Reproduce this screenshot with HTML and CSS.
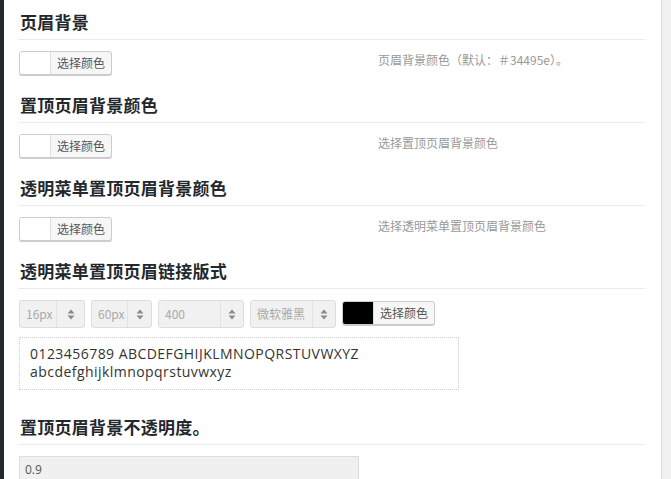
FILE: index.html
```html
<!DOCTYPE html>
<html lang="zh-CN">
<head>
<meta charset="utf-8">
<link rel="stylesheet" href="styles.css">
</head>
<body>
<div class="page">
  <div class="sidebar"></div>
  <main class="main">
    <section class="section">
      <h3 class="title">页眉背景</h3>
      <div class="row">
        <div class="color-btn"><span class="swatch"></span><span class="btn-label">选择颜色</span></div>
        <p class="desc">页眉背景颜色（默认：＃34495e）。</p>
      </div>
    </section>
    <section class="section">
      <h3 class="title">置顶页眉背景颜色</h3>
      <div class="row">
        <div class="color-btn"><span class="swatch"></span><span class="btn-label">选择颜色</span></div>
        <p class="desc">选择置顶页眉背景颜色</p>
      </div>
    </section>
    <section class="section">
      <h3 class="title">透明菜单置顶页眉背景颜色</h3>
      <div class="row">
        <div class="color-btn"><span class="swatch"></span><span class="btn-label">选择颜色</span></div>
        <p class="desc">选择透明菜单置顶页眉背景颜色</p>
      </div>
    </section>
    <section class="section section-type">
      <h3 class="title">透明菜单置顶页眉链接版式</h3>
      <div class="controls">
        <div class="select s1"><span class="sel-text">16px</span><span class="sel-arrow"><svg width="8" height="11" viewBox="0 0 8 11"><path d="M4 0.5L7.5 4.5H0.5Z M4 10.5L7.5 6.5H0.5Z" fill="#8a8a8a"/></svg></span></div>
        <div class="select s2"><span class="sel-text">60px</span><span class="sel-arrow"><svg width="8" height="11" viewBox="0 0 8 11"><path d="M4 0.5L7.5 4.5H0.5Z M4 10.5L7.5 6.5H0.5Z" fill="#8a8a8a"/></svg></span></div>
        <div class="select s3"><span class="sel-text">400</span><span class="sel-arrow"><svg width="8" height="11" viewBox="0 0 8 11"><path d="M4 0.5L7.5 4.5H0.5Z M4 10.5L7.5 6.5H0.5Z" fill="#8a8a8a"/></svg></span></div>
        <div class="select s4"><span class="sel-text">微软雅黑</span><span class="sel-arrow"><svg width="8" height="11" viewBox="0 0 8 11"><path d="M4 0.5L7.5 4.5H0.5Z M4 10.5L7.5 6.5H0.5Z" fill="#8a8a8a"/></svg></span></div>
        <div class="color-btn"><span class="swatch swatch-black"></span><span class="btn-label">选择颜色</span></div>
      </div>
      <div class="preview">
        <div class="pv-line">0123456789 ABCDEFGHIJKLMNOPQRSTUVWXYZ</div>
        <div class="pv-line">abcdefghijklmnopqrstuvwxyz</div>
      </div>
    </section>
    <section class="section section-last">
      <h3 class="title">置顶页眉背景不透明度。</h3>
      <div class="input">0.9</div>
    </section>
  </main>
  <div class="rail"></div>
</div>
</body>
</html>
```
FILE: styles.css
```css
* { box-sizing: border-box; }
html, body { margin: 0; padding: 0; height: 100%; overflow: hidden; background: #fff; }
body { font-family: "Noto Sans CJK SC", "Open Sans", sans-serif; color: #333; }
.page { display: flex; height: 479px; }
.sidebar { width: 4px; background: #23282d; flex: none; }
.rail { width: 10px; flex: none; background: #f1f1f1; border-left: 1px solid #dcdcdc; }
.main { flex: 1; padding: 10px 16px 0 14px; }
.section { margin-bottom: 18px; }
.title {
  margin: 0;
  font-size: 17px;
  line-height: 24px;
  font-weight: 700;
  letter-spacing: 0.25px;
  color: #23282d;
  padding: 0 0 5px 2px;
  border-bottom: 1px solid #ececec;
}
.row { display: grid; grid-template-columns: 359px 1fr; margin-top: 11px; padding-left: 1px; }
.color-btn {
  display: flex;
  width: 93px;
  height: 24px;
  border: 1px solid #ccc;
  border-radius: 3px;
  box-shadow: 0 1px 0 #ccc;
  overflow: hidden;
  background: #f7f7f7;
}
.swatch { width: 31px; background: #fff; border-right: 1px solid #ddd; flex: none; }
.swatch-black { background: #000; }
.btn-label { flex: 1; font-size: 12px; line-height: 22px; color: #555; padding-left: 6px; }
.desc { margin: 0; font-size: 12px; line-height: 18px; color: #999; }
.controls { display: flex; gap: 6px; margin-top: 11px; padding-left: 1px; align-items: flex-start; }
.controls .color-btn { margin-top: 1px; }
.select {
  display: flex;
  height: 28px;
  border: 1px solid #ddd;
  border-radius: 3px;
  background: #f1f1f1;
}
.s1 { width: 66px; }
.s2 { width: 61px; }
.s3 { width: 86px; }
.s4 { width: 86px; }
.sel-text { flex: 1; font-size: 12px; line-height: 26px; color: #aaa; padding-left: 6px; white-space: nowrap; overflow: hidden; }
.sel-arrow { width: 28px; flex: none; display: flex; align-items: center; justify-content: center; border-left: 1px solid #e2e2e2; }
.s2 .sel-arrow { width: 24px; }
.s3 .sel-arrow { width: 23px; }
.s4 .sel-arrow { width: 23px; }
.preview {
  margin: 9px 0 0 1px;
  width: 440px;
  height: 53px;
  border: 1px dotted #ccc;
  padding: 7px 10px 0 10px;
  font-family: "Open Sans", sans-serif;
  font-size: 14px;
  letter-spacing: 0.45px;
  color: #333;
}
.pv-line { line-height: 18px; white-space: nowrap; }
.section-type { margin-bottom: 25px; }
.input {
  margin: 11px 0 0 1px;
  width: 340px;
  height: 28px;
  border: 1px solid #ddd;
  background: #f0f0f0;
  padding-left: 5px;
  font-family: "Open Sans", sans-serif;
  font-size: 12px;
  line-height: 26px;
  color: #555;
}
```
